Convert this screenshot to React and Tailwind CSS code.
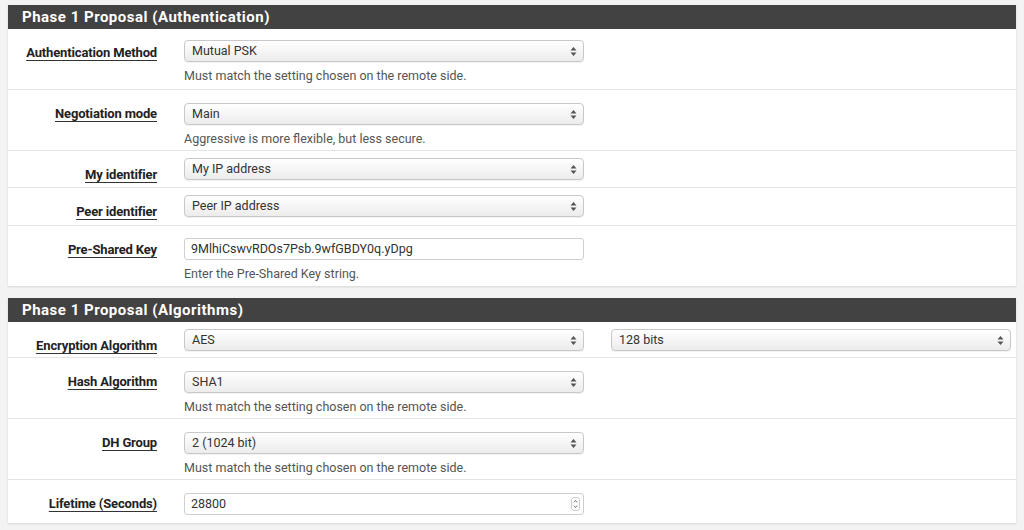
import React from 'react';

const font = { fontFamily: 'Roboto, "Liberation Sans", sans-serif' };

function Arrows() {
  return (
    <svg width="7" height="11" viewBox="0 0 7 11" className="absolute right-[6px] top-[5px]">
      <path d="M3.5 1 L6.5 4.5 L0.5 4.5 Z" fill="#555" />
      <path d="M3.5 10 L6.5 6.5 L0.5 6.5 Z" fill="#555" />
    </svg>
  );
}

function Select({ value }) {
  return (
    <div className="relative h-[22px] w-[400px] rounded-[4px] border border-[#c8c8c8] bg-gradient-to-b from-[#ffffff] to-[#ececec] pl-[7px] text-[12.5px] leading-[20px] text-[#333] shadow-[0_1px_1px_rgba(0,0,0,0.06)]">
      {value}
      <Arrows />
    </div>
  );
}

function Input({ value, spinner }) {
  return (
    <div className="relative h-[22px] w-[400px] rounded-[3px] border border-[#cfcfcf] bg-white pl-[6px] text-[12.5px] leading-[20px] text-[#333]">
      {value}
      {spinner && (
        <div className="absolute right-[3px] top-[3px] flex h-[14px] w-[9px] flex-col items-center justify-center rounded-[3px] border border-[#ccc]">
          <svg width="5" height="10" viewBox="0 0 5 10">
            <path d="M0.8 3.5 L2.5 1.5 L4.2 3.5" stroke="#666" strokeWidth="0.9" fill="none" />
            <path d="M0.8 6.5 L2.5 8.5 L4.2 6.5" stroke="#666" strokeWidth="0.9" fill="none" />
          </svg>
        </div>
      )}
    </div>
  );
}

function Row({ label, h, pt, help, children, last }) {
  return (
    <div className={`flex ${h} ${last ? '' : 'border-b border-[#e4e4e4]'}`}>
      <div className="w-[149px] pt-[16px] text-right text-[13px] leading-[15px]">
        <span className="font-bold tracking-[-0.15px] text-[#222] underline decoration-[#333] underline-offset-[3px]">
          {label}
        </span>
      </div>
      <div className={`ml-[27px] ${pt}`}>
        {children}
        {help && <div className="mt-[7px] text-[12.5px] leading-[14px] text-[#555]">{help}</div>}
      </div>
    </div>
  );
}

function Panel({ title, children }) {
  return (
    <div className="bg-white shadow-[0_1px_2px_rgba(0,0,0,0.12)]">
      <div className="flex h-[24px] items-center bg-[#424242] pl-[14px] text-[15px] font-bold tracking-[0.5px] text-white">
        {title}
      </div>
      {children}
    </div>
  );
}

const MATCH = 'Must match the setting chosen on the remote side.';

export default function App() {
  return (
    <div style={font} className="h-[530px] w-[1024px] overflow-hidden bg-[#f3f3f3] pl-[8px] pr-[8px] pt-[5px]">
      <Panel title="Phase 1 Proposal (Authentication)">
        <Row label="Authentication Method" h="h-[61px]" pt="pt-[11px]" help={MATCH}>
          <Select value="Mutual PSK" />
        </Row>
        <Row label="Negotiation mode" h="h-[61px]" pt="pt-[13px]" help="Aggressive is more flexible, but less secure.">
          <Select value="Main" />
        </Row>
        <Row label="My identifier" h="h-[37px]" pt="pt-[7px]">
          <Select value="My IP address" />
        </Row>
        <Row label="Peer identifier" h="h-[38px]" pt="pt-[7px]">
          <Select value="Peer IP address" />
        </Row>
        <Row label="Pre-Shared Key" h="h-[60px]" pt="pt-[12px]" help="Enter the Pre-Shared Key string." last>
          <Input value="9MlhiCswvRDOs7Psb.9wfGBDY0q.yDpg" />
        </Row>
      </Panel>
      <div className="h-[12px]" />
      <Panel title="Phase 1 Proposal (Algorithms)">
        <Row label="Encryption Algorithm" h="h-[36px]" pt="pt-[7px]">
          <div className="flex gap-[27px]">
            <Select value="AES" />
            <Select value="128 bits" />
          </div>
        </Row>
        <Row label="Hash Algorithm" h="h-[61px]" pt="pt-[13px]" help={MATCH}>
          <Select value="SHA1" />
        </Row>
        <Row label="DH Group" h="h-[61px]" pt="pt-[13px]" help={MATCH}>
          <Select value="2 (1024 bit)" />
        </Row>
        <Row label="Lifetime (Seconds)" h="h-[43px]" pt="pt-[13px]" last>
          <Input value="28800" spinner />
        </Row>
      </Panel>
    </div>
  );
}
